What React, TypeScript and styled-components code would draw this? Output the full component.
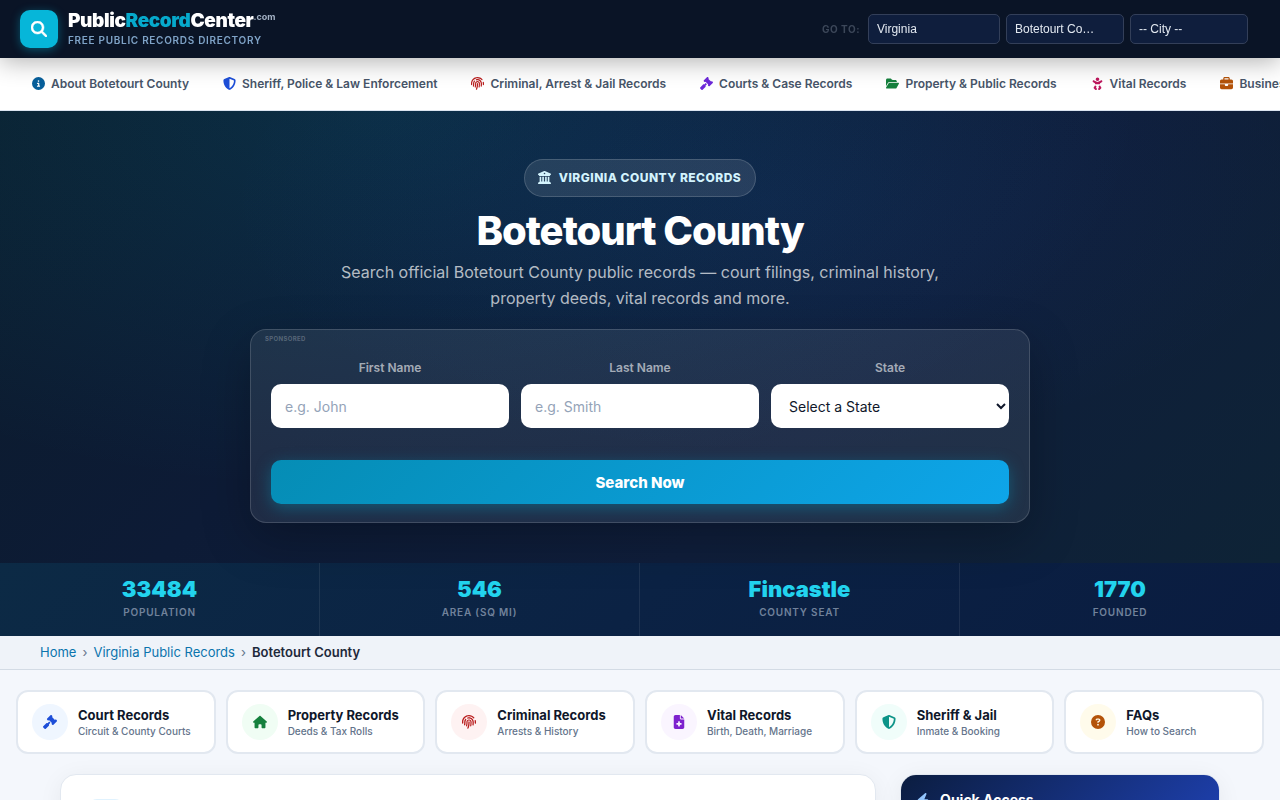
import React from 'react';
import styled, { createGlobalStyle } from 'styled-components';
import {
  FaBaby,
  FaBolt,
  FaBriefcase,
  FaBuildingColumns,
  FaCircleInfo,
  FaCircleQuestion,
  FaFileMedical,
  FaFingerprint,
  FaFolderOpen,
  FaGavel,
  FaHouse,
  FaMagnifyingGlass,
  FaShieldHalved,
} from 'react-icons/fa6';

const GlobalStyle = createGlobalStyle`
  *, *::before, *::after { box-sizing: border-box; }
  body {
    margin: 0;
    background: #f4f7fc;
    color: #0f172a;
    font-family: Inter, "Liberation Sans", sans-serif;
    font-size: 16px;
  }
  a { text-decoration: none; }
  input, select, button { font-family: inherit; }
  svg { flex: none; width: auto; height: 1em; }
`;

const Header = styled.header`
  position: relative;
  z-index: 2;
  display: flex;
  align-items: center;
  justify-content: space-between;
  height: 58px;
  padding: 0 32px 0 20px;
  background: #0a1426;
  box-shadow: 0 4px 24px rgba(0, 0, 0, 0.3);
`;

const Brand = styled.a`
  display: flex;
  align-items: center;
  gap: 10px;
  color: #ffffff;
`;

const BrandMark = styled.span`
  display: flex;
  align-items: center;
  justify-content: center;
  width: 38px;
  height: 38px;
  border-radius: 10px;
  background: #06b6d9;
  box-shadow: 0 2px 10px rgba(6, 182, 217, 0.4);
  font-size: 16px;
`;

const BrandText = styled.span`
  display: flex;
  flex-direction: column;
  padding-bottom: 2px;
`;

const BrandName = styled.span`
  display: flex;
  font-size: 19px;
  font-weight: 900;
  line-height: 24px;
  letter-spacing: -0.02em;

  em {
    font-style: normal;
    color: #06a9cc;
  }
`;

const BrandSuffix = styled.small`
  font-size: 9px;
  font-weight: 700;
  line-height: 16px;
  letter-spacing: 0;
  color: #a3b1c4;
`;

const Tagline = styled.span`
  font-size: 10px;
  font-weight: 600;
  line-height: 14px;
  letter-spacing: 0.07em;
  text-transform: uppercase;
  color: #7fa3c7;
`;

const Jump = styled.form`
  display: flex;
  align-items: center;
  gap: 6px;
`;

const JumpTitle = styled.span`
  margin-right: 2px;
  font-size: 10px;
  font-weight: 700;
  letter-spacing: 0.05em;
  color: #3c4759;
`;

const JumpSelect = styled.select<{ $wide?: boolean }>`
  appearance: none;
  width: ${(p) => (p.$wide ? 132 : 118)}px;
  height: 30px;
  padding: 0 24px 0 8px;
  border: 1px solid #333f59;
  border-radius: 5px;
  background: #0f1e3d;
  color: #e2e8f0;
  font-family: "Liberation Sans", Arial, sans-serif;
  font-size: 12px;
`;

const Nav = styled.nav`
  display: flex;
  gap: 2px;
  height: 53px;
  padding: 0 16px 2px;
  overflow-x: auto;
  scrollbar-width: none;
  background: #ffffff;
  border-bottom: 1px solid #dbe4f0;
`;

const NavLink = styled.a<{ $tint: string }>`
  display: flex;
  flex: none;
  align-items: center;
  gap: 6px;
  padding: 0 16px;
  color: #475569;
  font-size: 12px;
  font-weight: 600;
  white-space: nowrap;

  svg {
    font-size: 13px;
    color: ${(p) => p.$tint};
  }
`;

const Hero = styled.section`
  display: flex;
  flex-direction: column;
  align-items: center;
  padding: 48px 20px 40px;
  text-align: center;
  background:
    radial-gradient(ellipse at 30% 0%, rgba(6, 182, 212, 0.12), transparent 60%),
    radial-gradient(ellipse at 60% 20%, rgba(37, 99, 235, 0.07), transparent 50%),
    linear-gradient(135deg, #0b1c2c 0%, #0d1b36 35%, #0f1e3b 65%, #0e2336 100%);
`;

const Pill = styled.span`
  display: flex;
  align-items: center;
  gap: 8px;
  height: 38px;
  padding: 0 14px 2px 13px;
  border: 1px solid rgba(255, 255, 255, 0.16);
  border-radius: 19px;
  background: rgba(255, 255, 255, 0.1);
  color: #d3f3fd;
  font-size: 12px;
  font-weight: 800;
  letter-spacing: 0.04em;
  text-transform: uppercase;

  svg {
    font-size: 13px;
  }
`;

const Title = styled.h1`
  margin: 12px 0 6px;
  color: #ffffff;
  font-size: 40px;
  font-weight: 800;
  line-height: 44px;
  letter-spacing: -1px;
`;

const Lead = styled.p`
  max-width: 620px;
  margin: 0 0 18px;
  color: rgba(255, 255, 255, 0.7);
  font-size: 16px;
  line-height: 26px;
`;

const SearchCard = styled.form`
  position: relative;
  width: 100%;
  max-width: 780px;
  padding: 28px 20px 18px;
  border: 1px solid rgba(255, 255, 255, 0.15);
  border-radius: 16px;
  background: rgba(255, 255, 255, 0.08);
  box-shadow: 0 16px 48px rgba(0, 0, 0, 0.25);
`;

const Sponsored = styled.span`
  position: absolute;
  top: 4px;
  left: 14px;
  font-size: 6px;
  font-weight: 700;
  line-height: 10px;
  letter-spacing: 0.06em;
  color: rgba(255, 255, 255, 0.26);
`;

const Fields = styled.div`
  display: grid;
  grid-template-columns: repeat(3, 1fr);
  gap: 12px;
  margin-bottom: 32px;
`;

const Field = styled.label`
  display: flex;
  flex-direction: column;
  gap: 6px;
  color: rgba(255, 255, 255, 0.6);
  font-size: 12px;
  font-weight: 600;
  line-height: 20px;
`;

const TextInput = styled.input`
  width: 100%;
  height: 44px;
  padding: 0 14px;
  border: 0;
  border-radius: 10px;
  background: #ffffff;
  color: #0f172a;
  font-size: 14px;

  &::placeholder {
    color: #94a3b8;
  }
`;

const StateSelect = styled.select`
  width: 100%;
  height: 44px;
  padding: 0 0 0 14px;
  border: 0;
  border-radius: 10px;
  background: #ffffff;
  color: #0f172a;
  font-size: 14px;
`;

const SearchButton = styled.button`
  display: block;
  width: 100%;
  height: 44px;
  border: 0;
  border-radius: 10px;
  background: linear-gradient(135deg, #058db5, #0ea5e9);
  box-shadow: 0 4px 16px rgba(8, 145, 178, 0.45);
  color: #ffffff;
  font-size: 15px;
  font-weight: 800;
`;

const Stats = styled.dl`
  display: grid;
  grid-template-columns: repeat(4, 1fr);
  margin: 0;
  background: linear-gradient(135deg, #0c2a45 0%, #0b2244 50%, #0a1c40 100%);
`;

const Stat = styled.div`
  display: flex;
  flex-direction: column-reverse;
  align-items: center;
  height: 73px;
  padding: 14px 12px 16px;
  border-right: 1px solid rgba(255, 255, 255, 0.08);

  &:last-child {
    border-right: 0;
  }
`;

const StatValue = styled.dd`
  margin: 0;
  color: #22d3ee;
  font-size: 22px;
  font-weight: 900;
  line-height: 24px;
`;

const StatLabel = styled.dt`
  margin-top: 3px;
  color: #71829b;
  font-size: 10px;
  font-weight: 600;
  line-height: 16px;
  letter-spacing: 0.08em;
  text-transform: uppercase;
`;

const Crumbs = styled.nav`
  display: flex;
  align-items: center;
  gap: 6px;
  height: 34px;
  padding: 0 40px 2px;
  border-bottom: 1px solid #d3dbe5;
  background: #eff3f9;
  color: #64748b;
  font-size: 13px;

  a {
    color: #0b74ad;
  }

  strong {
    color: #1e293b;
    font-weight: 600;
  }
`;

const QuickLinks = styled.section`
  display: grid;
  grid-template-columns: repeat(6, 1fr);
  gap: 10px;
  padding: 20px 16px;
`;

const QuickCard = styled.a`
  display: flex;
  align-items: center;
  gap: 10px;
  height: 64px;
  padding: 0 14px;
  border: 2px solid #e2e8f0;
  border-radius: 12px;
  background: #ffffff;
`;

const QuickIcon = styled.span<{ $tint: string; $wash: string }>`
  display: flex;
  flex: none;
  align-items: center;
  justify-content: center;
  width: 36px;
  height: 36px;
  border-radius: 50%;
  background: ${(p) => p.$wash};
  color: ${(p) => p.$tint};
  font-size: 14px;
`;

const QuickText = styled.span`
  display: flex;
  flex-direction: column;
  padding-top: 2px;
  white-space: nowrap;
`;

const QuickTitle = styled.span`
  color: #0f172a;
  font-size: 13px;
  font-weight: 700;
  line-height: 17px;
`;

const QuickNote = styled.span`
  color: #64748b;
  font-size: 10px;
  font-weight: 500;
  line-height: 15px;
`;

const Content = styled.main`
  display: grid;
  grid-template-columns: 1fr 320px;
  gap: 24px;
  max-width: 1200px;
  margin: 0 auto;
  padding: 0 20px 40px;
`;

const Article = styled.article`
  min-height: 200px;
  padding: 24px 28px;
  border: 1px solid #e2e8f0;
  border-radius: 16px;
  background: #ffffff;
  box-shadow: 0 4px 24px rgba(15, 23, 42, 0.06);
`;

const ArticleBadge = styled.span`
  display: flex;
  align-items: center;
  justify-content: center;
  width: 34px;
  height: 34px;
  border-radius: 8px;
  background: #e0f2fe;
  color: #0369a1;
  font-size: 14px;
`;

const Aside = styled.aside`
  align-self: start;
  overflow: hidden;
  border: 1px solid #e2e8f0;
  border-radius: 16px;
  background: #ffffff;
  box-shadow: 0 4px 24px rgba(15, 23, 42, 0.06);
`;

const AsideTitle = styled.h2`
  display: flex;
  align-items: center;
  gap: 10px;
  margin: 0;
  padding: 15px;
  background: linear-gradient(135deg, #0b1d40, #1e40af);
  color: #ffffff;
  font-size: 14px;
  font-weight: 700;
  line-height: 20px;

  svg {
    color: #93c5fd;
  }
`;

const sections = [
  { label: 'About Botetourt County', icon: FaCircleInfo, tint: '#075f9b' },
  { label: 'Sheriff, Police & Law Enforcement', icon: FaShieldHalved, tint: '#1d4ed8' },
  { label: 'Criminal, Arrest & Jail Records', icon: FaFingerprint, tint: '#b91c1c' },
  { label: 'Courts & Case Records', icon: FaGavel, tint: '#6d28d9' },
  { label: 'Property & Public Records', icon: FaFolderOpen, tint: '#15803d' },
  { label: 'Vital Records', icon: FaBaby, tint: '#be185d' },
  { label: 'Business Records', icon: FaBriefcase, tint: '#b45309' },
];

const stats = [
  { value: '33484', label: 'Population' },
  { value: '546', label: 'Area (sq mi)' },
  { value: 'Fincastle', label: 'County Seat' },
  { value: '1770', label: 'Founded' },
];

const quickLinks = [
  { title: 'Court Records', note: 'Circuit & County Courts', icon: FaGavel, tint: '#1d4ed8', wash: '#eff6ff' },
  { title: 'Property Records', note: 'Deeds & Tax Rolls', icon: FaHouse, tint: '#15803d', wash: '#f0fdf4' },
  { title: 'Criminal Records', note: 'Arrests & History', icon: FaFingerprint, tint: '#b91c1c', wash: '#fef2f2' },
  { title: 'Vital Records', note: 'Birth, Death, Marriage', icon: FaFileMedical, tint: '#7e22ce', wash: '#faf5ff' },
  { title: 'Sheriff & Jail', note: 'Inmate & Booking', icon: FaShieldHalved, tint: '#0d9488', wash: '#f0fdfa' },
  { title: 'FAQs', note: 'How to Search', icon: FaCircleQuestion, tint: '#b45309', wash: '#fffbeb' },
];

export default function App() {
  return (
    <>
      <GlobalStyle />
      <Header>
        <Brand href="#">
          <BrandMark>
            <FaMagnifyingGlass stroke="currentColor" strokeWidth={16} />
          </BrandMark>
          <BrandText>
            <BrandName>
              Public<em>Record</em>Center<BrandSuffix>.com</BrandSuffix>
            </BrandName>
            <Tagline>Free Public Records Directory</Tagline>
          </BrandText>
        </Brand>
        <Jump>
          <JumpTitle>GO TO:</JumpTitle>
          <JumpSelect $wide aria-label="State">
            <option>Virginia</option>
          </JumpSelect>
          <JumpSelect aria-label="County">
            <option>Botetourt Co…</option>
          </JumpSelect>
          <JumpSelect aria-label="City">
            <option>-- City --</option>
          </JumpSelect>
        </Jump>
      </Header>

      <Nav>
        {sections.map(({ label, icon: Icon, tint }) => (
          <NavLink key={label} href="#" $tint={tint}>
            <Icon />
            {label}
          </NavLink>
        ))}
      </Nav>

      <Hero>
        <Pill>
          <FaBuildingColumns />
          Virginia County Records
        </Pill>
        <Title>Botetourt County</Title>
        <Lead>
          Search official Botetourt County public records — court filings, criminal history, property deeds, vital
          records and more.
        </Lead>
        <SearchCard>
          <Sponsored>SPONSORED</Sponsored>
          <Fields>
            <Field>
              First Name
              <TextInput type="text" placeholder="e.g. John" />
            </Field>
            <Field>
              Last Name
              <TextInput type="text" placeholder="e.g. Smith" />
            </Field>
            <Field>
              State
              <StateSelect>
                <option>Select a State</option>
              </StateSelect>
            </Field>
          </Fields>
          <SearchButton type="button">Search Now</SearchButton>
        </SearchCard>
      </Hero>

      <Stats>
        {stats.map((s) => (
          <Stat key={s.label}>
            <StatLabel>{s.label}</StatLabel>
            <StatValue>{s.value}</StatValue>
          </Stat>
        ))}
      </Stats>

      <Crumbs aria-label="Breadcrumb">
        <a href="#">Home</a>
        <span>›</span>
        <a href="#">Virginia Public Records</a>
        <span>›</span>
        <strong>Botetourt County</strong>
      </Crumbs>

      <QuickLinks>
        {quickLinks.map(({ title, note, icon: Icon, tint, wash }) => (
          <QuickCard key={title} href="#">
            <QuickIcon $tint={tint} $wash={wash}>
              <Icon />
            </QuickIcon>
            <QuickText>
              <QuickTitle>{title}</QuickTitle>
              <QuickNote>{note}</QuickNote>
            </QuickText>
          </QuickCard>
        ))}
      </QuickLinks>

      <Content>
        <Article>
          <ArticleBadge>
            <FaCircleInfo />
          </ArticleBadge>
        </Article>
        <Aside>
          <AsideTitle>
            <FaBolt />
            Quick Access
          </AsideTitle>
        </Aside>
      </Content>
    </>
  );
}
